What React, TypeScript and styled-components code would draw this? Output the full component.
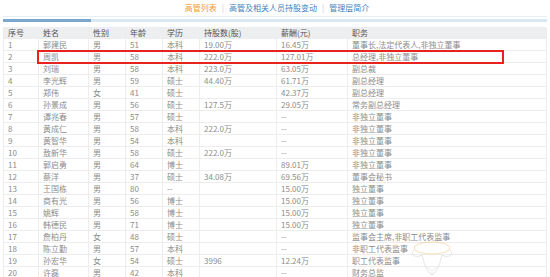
import React from "react";
import styled, { createGlobalStyle } from "styled-components";

const Global = createGlobalStyle`
  html, body { margin: 0; padding: 0; background: #fff; }
  body { font-family: "Noto Sans CJK SC", "Noto Sans", sans-serif; }
`;

const Page = styled.div`
  position: relative;
  width: 550px;
  height: 277px;
  overflow: hidden;
  background: #fff;
`;

const Tabs = styled.div`
  display: flex;
  justify-content: center;
  align-items: center;
  height: 16px;
  padding-left: 4px;
  font-size: 8px;
  line-height: 16px;
`;

const Tab = styled.span<{ $active?: boolean }>`
  color: ${(p) => (p.$active ? "#f39a2d" : "#3f7fbf")};
`;

const Sep = styled.span`
  color: #c8c8c8;
  margin: 0 5px;
`;

const Rule = styled.div`
  margin: 0 3px;
  border-top: 1px solid #e3eef6;
  height: 10px;
  display: flex;
  flex-direction: column;
`;

const Band = styled.div`
  margin-top: 2px;
  height: 3px;
  background: #d9e8f3;
  display: flex;
`;

const BandActive = styled.div`
  width: 88px;
  background: #7ba7cf;
`;

const Table = styled.div`
  margin: 0 3px;
  display: grid;
  grid-template-columns: 35px 50px 37px 37px 37px 77px 71px 200px;
  font-size: 8px;
`;

const Row = styled.div<{ $head?: boolean }>`
  display: contents;
  & > div {
    height: 12px;
    line-height: 12px;
    padding-left: 4px;
    box-sizing: border-box;
    border-bottom: 1px solid #ededed;
    border-left: 1px solid #ededed;
    white-space: nowrap;
    color: ${(p) => (p.$head ? "#555" : "#8c8c8c")};
    background: ${(p) => (p.$head ? "#eceef0" : "#fff")};
  }
  & > div:last-child {
    border-right: 1px solid #ededed;
  }
`;

const Cell = styled.div``;

const Highlight = styled.div`
  position: absolute;
  left: 37px;
  top: 50px;
  width: 467px;
  height: 14px;
  border: 2px solid #e8231d;
  box-sizing: border-box;
  pointer-events: none;
`;

const Mark = styled.svg`
  position: absolute;
  left: 408px;
  top: 240px;
  opacity: 0.75;
`;

const head = ["序号", "姓名", "性别", "年龄", "学历", "持股数(股)", "薪酬(元)", "职务"];

const rows: string[][] = [
  ["1", "郭建民", "男", "51", "本科", "19.00万", "16.45万", "董事长,法定代表人,非独立董事"],
  ["2", "周凯", "男", "58", "本科", "222.0万", "127.01万", "总经理,非独立董事"],
  ["3", "刘瑞", "男", "58", "本科", "223.0万", "63.05万", "副总裁"],
  ["4", "李光辉", "男", "59", "硕士", "44.40万", "61.71万", "副总经理"],
  ["5", "郑伟", "女", "41", "硕士", "", "42.37万", "副总经理"],
  ["6", "孙景成", "男", "56", "硕士", "127.5万", "29.05万", "常务副总经理"],
  ["7", "谭兆春", "男", "57", "硕士", "", "--", "非独立董事"],
  ["8", "黄成仁", "男", "58", "本科", "222.0万", "--", "非独立董事"],
  ["9", "黄智华", "男", "54", "本科", "", "--", "非独立董事"],
  ["10", "敖新华", "男", "58", "硕士", "222.0万", "--", "非独立董事"],
  ["11", "郭启勇", "男", "64", "博士", "", "89.01万", "非独立董事"],
  ["12", "蔡洋", "男", "37", "硕士", "34.08万", "69.56万", "董事会秘书"],
  ["13", "王国栋", "男", "80", "--", "", "15.00万", "独立董事"],
  ["14", "商有光", "男", "56", "博士", "", "15.00万", "独立董事"],
  ["15", "姚辉", "男", "58", "博士", "", "15.00万", "独立董事"],
  ["16", "韩德民", "男", "71", "博士", "", "15.00万", "独立董事"],
  ["17", "詹柏丹", "女", "48", "硕士", "", "--", "监事会主席,非职工代表监事"],
  ["18", "陈立勤", "男", "57", "本科", "", "--", "非职工代表监事"],
  ["19", "孙宏华", "女", "54", "硕士", "3996", "12.24万", "职工代表监事"],
  ["20", "许磊", "男", "42", "本科", "", "--", "财务总监"],
];

export default function App() {
  return (
    <Page>
      <Global />
      <Tabs>
        <Tab $active>高管列表</Tab>
        <Sep>|</Sep>
        <Tab>高管及相关人员持股变动</Tab>
        <Sep>|</Sep>
        <Tab>管理层简介</Tab>
      </Tabs>
      <Rule>
        <Band>
          <BandActive />
        </Band>
      </Rule>
      <Table>
        <Row $head>
          {head.map((h) => (
            <Cell key={h}>{h}</Cell>
          ))}
        </Row>
        {rows.map((r) => (
          <Row key={r[0]}>
            {r.map((c, i) => (
              <Cell key={i}>{c}</Cell>
            ))}
          </Row>
        ))}
      </Table>
      <Highlight />
      <Mark width="48" height="38" viewBox="0 0 48 38">
        <ellipse cx="24" cy="8" rx="18" ry="6" fill="none" stroke="#f5c98a" strokeWidth="0.8" />
        <path d="M6 10 C1 16, 9 18, 14 15 M42 10 C47 16, 39 18, 34 15" fill="none" stroke="#d0d0d0" strokeWidth="0.8" />
        <path d="M14 15 C16 23, 18 31, 24 35 C30 31, 32 23, 34 15" fill="none" stroke="#d6d6d6" strokeWidth="0.8" />
        <path d="M19 27 L24 31 L29 27 M21 32 C23 34, 25 34, 27 32" fill="none" stroke="#d6d6d6" strokeWidth="0.7" />
      </Mark>
    </Page>
  );
}
